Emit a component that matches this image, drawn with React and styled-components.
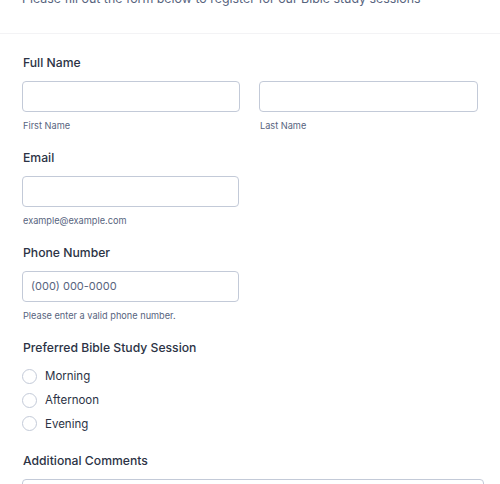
import styled, { createGlobalStyle } from "styled-components";

const GlobalStyle = createGlobalStyle`
  body {
    margin: 0;
    background: #fff;
    font-family: Inter, "Noto Sans", sans-serif;
    color: #2c3345;
    overflow: hidden;
  }
`;

const Page = styled.div`
  width: 500px;
  display: flex;
  flex-direction: column;
`;

const Header = styled.div`
  margin-top: -11px;
  padding: 0 22px 24px;
  border-bottom: 1px solid #f3f3f5;
  font-size: 12.4px;
  line-height: 20px;
  color: #57647e;
`;

const Form = styled.form`
  display: flex;
  flex-direction: column;
  padding: 19.5px 16px 0 22px;
  gap: 16px;
`;

const Field = styled.div`
  display: flex;
  flex-direction: column;
`;

const Label = styled.label`
  font-size: 12.2px;
  font-weight: 500;
  line-height: 17px;
  margin: 0 0 10px 1px;
  color: #2c3345;
`;

const Row = styled.div`
  display: grid;
  grid-template-columns: 218px 219px;
  column-gap: 19px;
`;

const Input = styled.input`
  box-sizing: border-box;
  width: ${(p) => p.$width || "100%"};
  height: 31px;
  border: 1px solid #c3cad8;
  border-radius: 4px;
  padding: 0 8px;
  font-family: inherit;
  font-size: 11px;
  color: #2c3345;
  outline: none;
  &::placeholder {
    color: #57647e;
  }
`;

const Sub = styled.span`
  display: block;
  margin: 7px 0 0 1px;
  font-size: 9.2px;
  line-height: 14px;
  color: #57647e;
`;

const Options = styled.div`
  display: flex;
  flex-direction: column;
  margin: -1px 0 0;
`;

const Option = styled.label`
  display: flex;
  align-items: center;
  height: 23.7px;
  gap: 8px;
  font-size: 11.5px;
  color: #2c3345;
`;

const Radio = styled.span`
  box-sizing: border-box;
  width: 15px;
  height: 15px;
  border: 1px solid #c3cad8;
  border-radius: 50%;
  background: #fff;
`;

const TextArea = styled.textarea`
  box-sizing: border-box;
  width: 462px;
  height: 80px;
  border: 1px solid #c3cad8;
  border-radius: 4px;
  resize: none;
  font-family: inherit;
`;

export default function App() {
  return (
    <Page>
      <GlobalStyle />
      <Header>
        Please fill out the form below to register for our Bible study sessions
      </Header>
      <Form>
        <Field>
          <Label>Full Name</Label>
          <Row>
            <div>
              <Input />
              <Sub>First Name</Sub>
            </div>
            <div>
              <Input />
              <Sub>Last Name</Sub>
            </div>
          </Row>
        </Field>
        <Field>
          <Label>Email</Label>
          <Input $width="217px" />
          <Sub>example@example.com</Sub>
        </Field>
        <Field>
          <Label>Phone Number</Label>
          <Input $width="217px" placeholder="(000) 000-0000" />
          <Sub>Please enter a valid phone number.</Sub>
        </Field>
        <Field>
          <Label>Preferred Bible Study Session</Label>
          <Options>
            {["Morning", "Afternoon", "Evening"].map((o) => (
              <Option key={o}>
                <Radio />
                {o}
              </Option>
            ))}
          </Options>
        </Field>
        <Field>
          <Label>Additional Comments</Label>
          <TextArea />
        </Field>
      </Form>
    </Page>
  );
}
